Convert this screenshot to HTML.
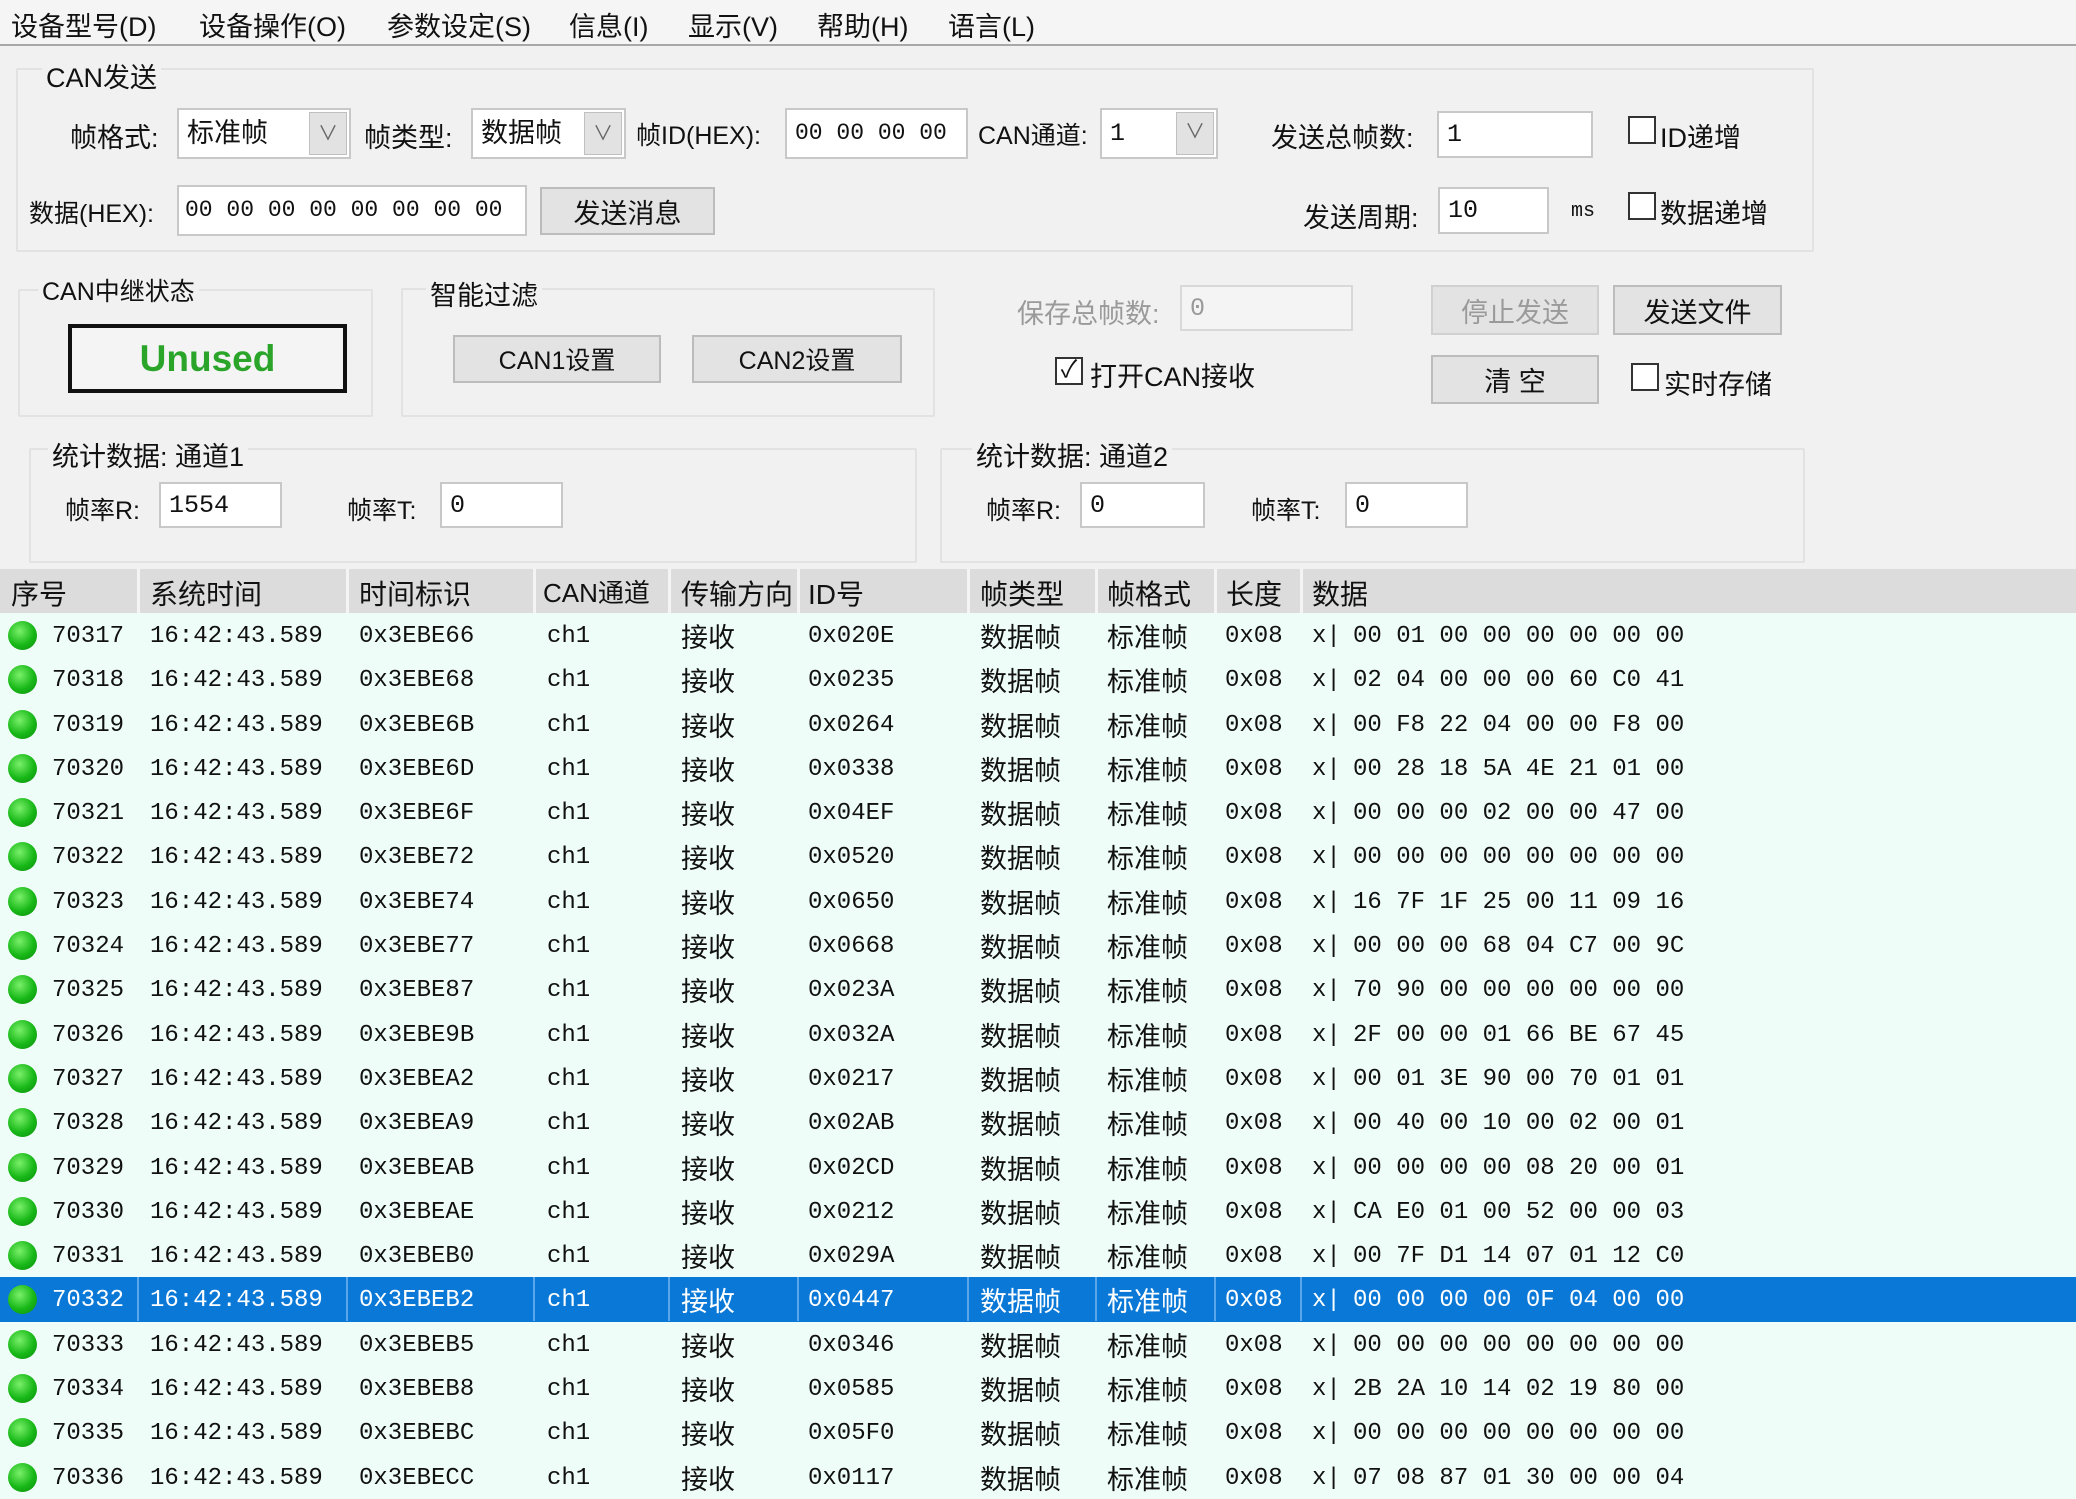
<!DOCTYPE html>
<html><head><meta charset="utf-8">
<style>
*{margin:0;padding:0;box-sizing:border-box}
body{width:2076px;height:1498px;overflow:hidden;background:#f1f1f1;font-family:"Liberation Sans","Noto Sans CJK SC",sans-serif;color:#111;position:relative}
.a{position:absolute;white-space:nowrap}
.menu{left:0;top:0;width:2076px;height:46px;background:#f5f5f5;border-bottom:2px solid #a8a8a8}
.menu span{position:absolute;top:5px;font-size:27px}
.grp{position:absolute;border:2px solid #e2e2e2;border-radius:2px}
.gt{position:absolute;font-size:27px;background:#f1f1f1;padding:0 4px}
.lbl{position:absolute;font-size:27px;white-space:nowrap}
.in{position:absolute;background:#fff;border:2px solid #c8c8c8;font-family:"Liberation Mono","Noto Sans CJK SC",monospace;font-size:25px;padding-left:8px;display:flex;align-items:center;white-space:pre;overflow:hidden;line-height:1}
.combo .dd{position:absolute;right:2px;top:2px;bottom:2px;width:38px;background:#e2e2e2;border:1px solid #c0c0c0;display:flex;align-items:center;justify-content:center;color:#666;font-size:20px}
.btn{position:absolute;background:#e3e3e3;border:2px solid #bcbcbc;font-size:27px;display:flex;align-items:center;justify-content:center}
.cb{position:absolute;width:28px;height:28px;border:2px solid #333;background:#fff}
.hdr{left:0;top:569px;width:2076px;height:44px;background:#dcdcdc}
.hdr span{position:absolute;top:4px;font-size:28px}
.hs{position:absolute;top:0;width:3px;height:44px;background:#f4f4f4}
.rows{left:0;top:613px;width:2076px}
.r{position:relative;height:44.3px;background:#effdf8;font-family:"Liberation Mono","Noto Sans CJK SC",monospace;font-size:24px}
.r span{position:absolute;top:10px;white-space:pre}
.r .z{font-family:"Liberation Sans","Noto Sans CJK SC",sans-serif;font-size:27px;top:3px}
.r i{position:absolute;left:8px;top:8px;width:29px;height:29px;border-radius:50%;background:radial-gradient(circle at 40% 35%,#7af06a,#18b818 55%,#0c8a0c)}
.sel{background:#0a78d7;color:#fff}
.sel b{position:absolute;top:0;width:2px;height:44px;background:#5aa6ea}
.c1{left:52px}.c2{left:150px}.c3{left:359px}.c4{left:547px}.c5{left:681px}.c6{left:808px}.c7{left:980px}.c8{left:1107px}.c9{left:1225px}.c10{left:1312px}.c11{left:1353px}
</style></head><body>
<div class="a menu">
<span style="left:11px">设备型号(D)</span><span style="left:199px">设备操作(O)</span><span style="left:387px">参数设定(S)</span><span style="left:569px">信息(I)</span><span style="left:688px">显示(V)</span><span style="left:817px">帮助(H)</span><span style="left:948px">语言(L)</span>
</div>

<div class="grp" style="left:16px;top:68px;width:1798px;height:184px"></div>
<div class="gt" style="left:42px;top:56px">CAN发送</div>
<div class="lbl" style="left:70px;top:116px">帧格式:</div>
<div class="in combo" style="left:177px;top:108px;width:174px;height:51px;font-family:'Liberation Sans','Noto Sans CJK SC',sans-serif;font-size:27px">标准帧<div class="dd">∨</div></div>
<div class="lbl" style="left:364px;top:116px">帧类型:</div>
<div class="in combo" style="left:471px;top:108px;width:155px;height:51px;font-family:'Liberation Sans','Noto Sans CJK SC',sans-serif;font-size:27px">数据帧<div class="dd">∨</div></div>
<div class="lbl" style="left:636px;top:116px;font-size:25px">帧ID(HEX):</div>
<div class="in" style="left:785px;top:108px;width:183px;height:51px;font-size:23px">00 00 00 00</div>
<div class="lbl" style="left:978px;top:116px;font-size:25px">CAN通道:</div>
<div class="in combo" style="left:1100px;top:108px;width:118px;height:51px">1<div class="dd">∨</div></div>
<div class="lbl" style="left:1271px;top:116px">发送总帧数:</div>
<div class="in" style="left:1437px;top:111px;width:156px;height:47px">1</div>
<div class="cb" style="left:1628px;top:116px"></div><div class="lbl" style="left:1660px;top:116px">ID递增</div>
<div class="lbl" style="left:29px;top:194px;font-size:25px">数据(HEX):</div>
<div class="in" style="left:177px;top:185px;width:350px;height:51px;font-size:23px;padding-left:6px">00 00 00 00 00 00 00 00</div>
<div class="btn" style="left:540px;top:187px;width:175px;height:48px">发送消息</div>
<div class="lbl" style="left:1303px;top:196px">发送周期:</div>
<div class="in" style="left:1438px;top:187px;width:111px;height:47px">10</div>
<div class="lbl" style="left:1571px;top:200px;font-family:'Liberation Mono',monospace;font-size:20px">ms</div>
<div class="cb" style="left:1628px;top:192px"></div><div class="lbl" style="left:1660px;top:192px">数据递增</div>

<div class="grp" style="left:18px;top:289px;width:355px;height:128px"></div>
<div class="gt" style="left:38px;top:272px;font-size:25px">CAN中继状态</div>
<div class="a" style="left:68px;top:324px;width:279px;height:69px;border:4px solid #111;background:#f4f4f4;color:#2aa52a;font-size:37px;font-weight:bold;display:flex;align-items:center;justify-content:center">Unused</div>
<div class="grp" style="left:401px;top:288px;width:534px;height:129px"></div>
<div class="gt" style="left:426px;top:274px">智能过滤</div>
<div class="btn" style="left:453px;top:335px;width:208px;height:48px;font-size:25px">CAN1设置</div>
<div class="btn" style="left:692px;top:335px;width:210px;height:48px;font-size:25px">CAN2设置</div>

<div class="lbl" style="left:1017px;top:292px;color:#9a9a9a">保存总帧数:</div>
<div class="in" style="left:1180px;top:285px;width:173px;height:46px;border-color:#d8d8d8;background:#f4f4f4;color:#999">0</div>
<div class="btn" style="left:1431px;top:285px;width:168px;height:50px;color:#9a9a9a;border-color:#d0d0d0">停止发送</div>
<div class="btn" style="left:1613px;top:285px;width:169px;height:50px">发送文件</div>
<div class="cb" style="left:1055px;top:357px;font-size:24px;line-height:22px;text-align:center;border-width:2px">✓</div>
<div class="lbl" style="left:1090px;top:355px">打开CAN接收</div>
<div class="btn" style="left:1431px;top:355px;width:168px;height:49px">清 空</div>
<div class="cb" style="left:1631px;top:363px"></div><div class="lbl" style="left:1664px;top:363px">实时存储</div>

<div class="grp" style="left:29px;top:448px;width:888px;height:115px"></div>
<div class="gt" style="left:48px;top:435px">统计数据: 通道1</div>
<div class="lbl" style="left:65px;top:491px;font-size:25px">帧率R:</div>
<div class="in" style="left:159px;top:482px;width:123px;height:46px">1554</div>
<div class="lbl" style="left:347px;top:491px;font-size:25px">帧率T:</div>
<div class="in" style="left:440px;top:482px;width:123px;height:46px">0</div>
<div class="grp" style="left:940px;top:448px;width:865px;height:115px"></div>
<div class="gt" style="left:972px;top:435px">统计数据: 通道2</div>
<div class="lbl" style="left:986px;top:491px;font-size:25px">帧率R:</div>
<div class="in" style="left:1080px;top:482px;width:125px;height:46px">0</div>
<div class="lbl" style="left:1251px;top:491px;font-size:25px">帧率T:</div>
<div class="in" style="left:1345px;top:482px;width:123px;height:46px">0</div>

<div class="a hdr">
<span style="left:11px">序号</span><span style="left:150px">系统时间</span><span style="left:359px">时间标识</span><span style="left:543px;font-size:26px">CAN通道</span><span style="left:681px">传输方向</span><span style="left:808px">ID号</span><span style="left:980px">帧类型</span><span style="left:1107px">帧格式</span><span style="left:1226px">长度</span><span style="left:1312px">数据</span>
<div class="hs" style="left:137px"></div><div class="hs" style="left:346px"></div><div class="hs" style="left:533px"></div><div class="hs" style="left:668px"></div><div class="hs" style="left:797px"></div><div class="hs" style="left:967px"></div><div class="hs" style="left:1095px"></div><div class="hs" style="left:1214px"></div><div class="hs" style="left:1300px"></div>
</div>

<div class="a rows">
<div class="r"><i></i><span class="c1">70317</span><span class="c2">16:42:43.589</span><span class="c3">0x3EBE66</span><span class="c4">ch1</span><span class="c5 z">接收</span><span class="c6">0x020E</span><span class="c7 z">数据帧</span><span class="c8 z">标准帧</span><span class="c9">0x08</span><span class="c10">x|</span><span class="c11">00 01 00 00 00 00 00 00</span></div>
<div class="r"><i></i><span class="c1">70318</span><span class="c2">16:42:43.589</span><span class="c3">0x3EBE68</span><span class="c4">ch1</span><span class="c5 z">接收</span><span class="c6">0x0235</span><span class="c7 z">数据帧</span><span class="c8 z">标准帧</span><span class="c9">0x08</span><span class="c10">x|</span><span class="c11">02 04 00 00 00 60 C0 41</span></div>
<div class="r"><i></i><span class="c1">70319</span><span class="c2">16:42:43.589</span><span class="c3">0x3EBE6B</span><span class="c4">ch1</span><span class="c5 z">接收</span><span class="c6">0x0264</span><span class="c7 z">数据帧</span><span class="c8 z">标准帧</span><span class="c9">0x08</span><span class="c10">x|</span><span class="c11">00 F8 22 04 00 00 F8 00</span></div>
<div class="r"><i></i><span class="c1">70320</span><span class="c2">16:42:43.589</span><span class="c3">0x3EBE6D</span><span class="c4">ch1</span><span class="c5 z">接收</span><span class="c6">0x0338</span><span class="c7 z">数据帧</span><span class="c8 z">标准帧</span><span class="c9">0x08</span><span class="c10">x|</span><span class="c11">00 28 18 5A 4E 21 01 00</span></div>
<div class="r"><i></i><span class="c1">70321</span><span class="c2">16:42:43.589</span><span class="c3">0x3EBE6F</span><span class="c4">ch1</span><span class="c5 z">接收</span><span class="c6">0x04EF</span><span class="c7 z">数据帧</span><span class="c8 z">标准帧</span><span class="c9">0x08</span><span class="c10">x|</span><span class="c11">00 00 00 02 00 00 47 00</span></div>
<div class="r"><i></i><span class="c1">70322</span><span class="c2">16:42:43.589</span><span class="c3">0x3EBE72</span><span class="c4">ch1</span><span class="c5 z">接收</span><span class="c6">0x0520</span><span class="c7 z">数据帧</span><span class="c8 z">标准帧</span><span class="c9">0x08</span><span class="c10">x|</span><span class="c11">00 00 00 00 00 00 00 00</span></div>
<div class="r"><i></i><span class="c1">70323</span><span class="c2">16:42:43.589</span><span class="c3">0x3EBE74</span><span class="c4">ch1</span><span class="c5 z">接收</span><span class="c6">0x0650</span><span class="c7 z">数据帧</span><span class="c8 z">标准帧</span><span class="c9">0x08</span><span class="c10">x|</span><span class="c11">16 7F 1F 25 00 11 09 16</span></div>
<div class="r"><i></i><span class="c1">70324</span><span class="c2">16:42:43.589</span><span class="c3">0x3EBE77</span><span class="c4">ch1</span><span class="c5 z">接收</span><span class="c6">0x0668</span><span class="c7 z">数据帧</span><span class="c8 z">标准帧</span><span class="c9">0x08</span><span class="c10">x|</span><span class="c11">00 00 00 68 04 C7 00 9C</span></div>
<div class="r"><i></i><span class="c1">70325</span><span class="c2">16:42:43.589</span><span class="c3">0x3EBE87</span><span class="c4">ch1</span><span class="c5 z">接收</span><span class="c6">0x023A</span><span class="c7 z">数据帧</span><span class="c8 z">标准帧</span><span class="c9">0x08</span><span class="c10">x|</span><span class="c11">70 90 00 00 00 00 00 00</span></div>
<div class="r"><i></i><span class="c1">70326</span><span class="c2">16:42:43.589</span><span class="c3">0x3EBE9B</span><span class="c4">ch1</span><span class="c5 z">接收</span><span class="c6">0x032A</span><span class="c7 z">数据帧</span><span class="c8 z">标准帧</span><span class="c9">0x08</span><span class="c10">x|</span><span class="c11">2F 00 00 01 66 BE 67 45</span></div>
<div class="r"><i></i><span class="c1">70327</span><span class="c2">16:42:43.589</span><span class="c3">0x3EBEA2</span><span class="c4">ch1</span><span class="c5 z">接收</span><span class="c6">0x0217</span><span class="c7 z">数据帧</span><span class="c8 z">标准帧</span><span class="c9">0x08</span><span class="c10">x|</span><span class="c11">00 01 3E 90 00 70 01 01</span></div>
<div class="r"><i></i><span class="c1">70328</span><span class="c2">16:42:43.589</span><span class="c3">0x3EBEA9</span><span class="c4">ch1</span><span class="c5 z">接收</span><span class="c6">0x02AB</span><span class="c7 z">数据帧</span><span class="c8 z">标准帧</span><span class="c9">0x08</span><span class="c10">x|</span><span class="c11">00 40 00 10 00 02 00 01</span></div>
<div class="r"><i></i><span class="c1">70329</span><span class="c2">16:42:43.589</span><span class="c3">0x3EBEAB</span><span class="c4">ch1</span><span class="c5 z">接收</span><span class="c6">0x02CD</span><span class="c7 z">数据帧</span><span class="c8 z">标准帧</span><span class="c9">0x08</span><span class="c10">x|</span><span class="c11">00 00 00 00 08 20 00 01</span></div>
<div class="r"><i></i><span class="c1">70330</span><span class="c2">16:42:43.589</span><span class="c3">0x3EBEAE</span><span class="c4">ch1</span><span class="c5 z">接收</span><span class="c6">0x0212</span><span class="c7 z">数据帧</span><span class="c8 z">标准帧</span><span class="c9">0x08</span><span class="c10">x|</span><span class="c11">CA E0 01 00 52 00 00 03</span></div>
<div class="r"><i></i><span class="c1">70331</span><span class="c2">16:42:43.589</span><span class="c3">0x3EBEB0</span><span class="c4">ch1</span><span class="c5 z">接收</span><span class="c6">0x029A</span><span class="c7 z">数据帧</span><span class="c8 z">标准帧</span><span class="c9">0x08</span><span class="c10">x|</span><span class="c11">00 7F D1 14 07 01 12 C0</span></div>
<div class="r sel"><i></i><b style="left:137px"></b><b style="left:346px"></b><b style="left:533px"></b><b style="left:668px"></b><b style="left:797px"></b><b style="left:967px"></b><b style="left:1095px"></b><b style="left:1214px"></b><b style="left:1300px"></b><span class="c1">70332</span><span class="c2">16:42:43.589</span><span class="c3">0x3EBEB2</span><span class="c4">ch1</span><span class="c5 z">接收</span><span class="c6">0x0447</span><span class="c7 z">数据帧</span><span class="c8 z">标准帧</span><span class="c9">0x08</span><span class="c10">x|</span><span class="c11">00 00 00 00 0F 04 00 00</span></div>
<div class="r"><i></i><span class="c1">70333</span><span class="c2">16:42:43.589</span><span class="c3">0x3EBEB5</span><span class="c4">ch1</span><span class="c5 z">接收</span><span class="c6">0x0346</span><span class="c7 z">数据帧</span><span class="c8 z">标准帧</span><span class="c9">0x08</span><span class="c10">x|</span><span class="c11">00 00 00 00 00 00 00 00</span></div>
<div class="r"><i></i><span class="c1">70334</span><span class="c2">16:42:43.589</span><span class="c3">0x3EBEB8</span><span class="c4">ch1</span><span class="c5 z">接收</span><span class="c6">0x0585</span><span class="c7 z">数据帧</span><span class="c8 z">标准帧</span><span class="c9">0x08</span><span class="c10">x|</span><span class="c11">2B 2A 10 14 02 19 80 00</span></div>
<div class="r"><i></i><span class="c1">70335</span><span class="c2">16:42:43.589</span><span class="c3">0x3EBEBC</span><span class="c4">ch1</span><span class="c5 z">接收</span><span class="c6">0x05F0</span><span class="c7 z">数据帧</span><span class="c8 z">标准帧</span><span class="c9">0x08</span><span class="c10">x|</span><span class="c11">00 00 00 00 00 00 00 00</span></div>
<div class="r"><i></i><span class="c1">70336</span><span class="c2">16:42:43.589</span><span class="c3">0x3EBECC</span><span class="c4">ch1</span><span class="c5 z">接收</span><span class="c6">0x0117</span><span class="c7 z">数据帧</span><span class="c8 z">标准帧</span><span class="c9">0x08</span><span class="c10">x|</span><span class="c11">07 08 87 01 30 00 00 04</span></div>
</div>
</body></html>
